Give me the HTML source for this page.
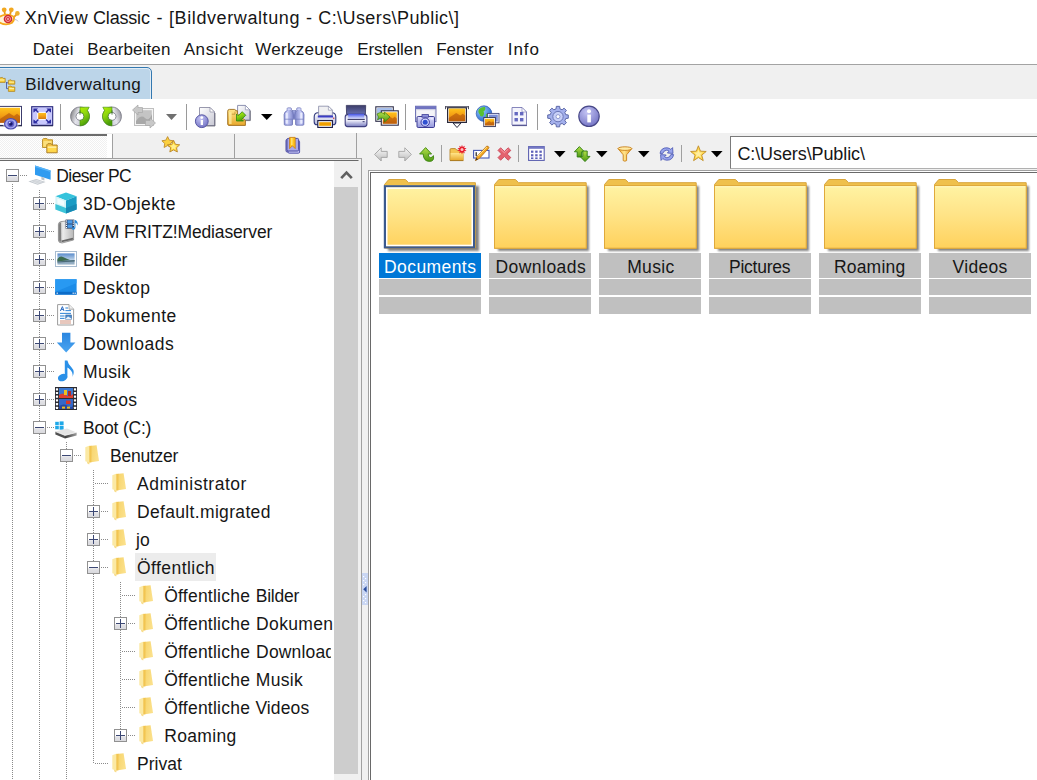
<!DOCTYPE html>
<html lang="de">
<head>
<meta charset="utf-8">
<title>XnView Classic - [Bildverwaltung - C:\Users\Public\]</title>
<style>
html,body{margin:0;padding:0;}
body{width:1037px;height:780px;overflow:hidden;position:relative;background:#fff;font-family:"Liberation Sans",sans-serif;}
.a{position:absolute;}
.t{position:absolute;white-space:pre;line-height:24px;font-family:"Liberation Sans",sans-serif;}
.clip{position:absolute;left:0;top:0;height:780px;overflow:hidden;}
svg{position:absolute;overflow:visible;}
.vsep{position:absolute;width:1px;background:#a0a0a0;}
.dotv{position:absolute;width:1px;background-image:linear-gradient(#8a8a8a 50%,transparent 50%);background-size:1px 2px;}
.doth{position:absolute;height:1px;background-image:linear-gradient(90deg,#8a8a8a 50%,transparent 50%);background-size:2px 1px;}
.box{position:absolute;width:11px;height:11px;border:1px solid #919191;background:linear-gradient(#fff 0,#fff 50%,#e2e2e6 62%,#dadade 100%);}
.box i{position:absolute;left:1px;top:5px;width:9px;height:1px;background:#3c4874;}
.box b{position:absolute;left:5px;top:1px;width:1px;height:9px;background:#3c4874;}
.lb{position:absolute;width:102px;background:#c0c0c0;}
</style>
</head>
<body>
<svg width="0" height="0" style="position:absolute"><defs>
<linearGradient id="ffront" x1="0" y1="0" x2="0" y2="1"><stop offset="0" stop-color="#fff3a3"/><stop offset="0.45" stop-color="#ffe488"/><stop offset="1" stop-color="#ffd15c"/></linearGradient>
<filter id="fsh" x="-10%" y="-10%" width="130%" height="130%"><feGaussianBlur stdDeviation="1.3"/></filter>

<linearGradient id="gor" x1="0" y1="0" x2="0" y2="1"><stop offset="0" stop-color="#ffc41c"/><stop offset="0.5" stop-color="#f4a014"/><stop offset="1" stop-color="#d07410"/></linearGradient>
<linearGradient id="gbl" x1="0" y1="0" x2="0" y2="1"><stop offset="0" stop-color="#b8c0f0"/><stop offset="1" stop-color="#6d74c4"/></linearGradient>
<linearGradient id="ggr" x1="0" y1="0" x2="0" y2="1"><stop offset="0" stop-color="#b4e04a"/><stop offset="1" stop-color="#4e9a12"/></linearGradient>
<linearGradient id="ggy" x1="0" y1="0" x2="1" y2="1"><stop offset="0" stop-color="#f2f2f2"/><stop offset="1" stop-color="#9a9a9a"/></linearGradient>
<linearGradient id="gpg" x1="0" y1="0" x2="1" y2="1"><stop offset="0" stop-color="#ffffff"/><stop offset="1" stop-color="#c8c8d4"/></linearGradient>
<linearGradient id="gfo" x1="0" y1="0" x2="0" y2="1"><stop offset="0" stop-color="#ffe58a"/><stop offset="1" stop-color="#e8a82c"/></linearGradient>
<linearGradient id="gcam" x1="0" y1="0" x2="0" y2="1"><stop offset="0" stop-color="#e0e0fc"/><stop offset="1" stop-color="#9498dc"/></linearGradient>
<radialGradient id="ginfo" cx="0.4" cy="0.3" r="0.8"><stop offset="0" stop-color="#c4c4f4"/><stop offset="1" stop-color="#6c6cc0"/></radialGradient>
<radialGradient id="gglobe" cx="0.35" cy="0.3" r="0.8"><stop offset="0" stop-color="#9ad0ff"/><stop offset="1" stop-color="#1c5cc8"/></radialGradient>
<g id="bigfolder">
 <rect x="4" y="8" width="91" height="65" fill="#505050" opacity="0.7" filter="url(#fsh)"/>
 <path d="M0.5 6.5 L4.8 1.5 L21.4 1.5 L24.6 4.7 L92.2 4.7 L92.2 70.2 L0.5 70.2 Z" fill="#efc04c" stroke="#d7a43a" stroke-width="1"/>
 <rect x="0.5" y="7.5" width="91.7" height="62.7" fill="url(#ffront)" stroke="#dfa93c" stroke-width="1"/>
 <rect x="1.5" y="8.4" width="89.7" height="1" fill="#fff8c8" opacity="0.8"/>
</g>
<g id="bigfoldersel">
 <rect x="4" y="8" width="91" height="65" fill="#505050" opacity="0.7" filter="url(#fsh)"/>
 <path d="M0.5 6.5 L4.8 1.5 L21.4 1.5 L24.6 4.7 L91.4 4.7 L91.4 70 L0.5 70 Z" fill="#efc04c" stroke="#d7a43a" stroke-width="1"/>
 <rect x="0.5" y="7.5" width="90.6" height="62.5" fill="url(#ffront)"/>
 <rect x="0.9" y="8.3" width="89.2" height="61" fill="none" stroke="#3c5a8e" stroke-width="2.2"/>
 <rect x="2.75" y="10.15" width="85.5" height="57.3" fill="none" stroke="#fff" stroke-width="1.5"/>
</g>
</defs></svg>
<!-- title bar -->
<div class="a" id="titlebar" style="left:0;top:0;width:1037px;height:34px;background:#fff"></div>
<svg style="left:-3px;top:6px" width="24" height="22" viewBox="0 0 24 22">
<g stroke="#e8981c" stroke-width="1.8" fill="none"><path d="M8 8.5 L7.3 4.6"/><path d="M13 8.8 L14.2 4.6"/><path d="M16.5 11.6 L19.6 8.4"/></g>
<circle cx="7.2" cy="3.8" r="2.4" fill="#f2a820"/><circle cx="14.3" cy="3.8" r="2.4" fill="#f2a820"/><circle cx="20.4" cy="7.4" r="2.3" fill="#eeb02c"/>
<path d="M-1 12.4 Q8 4.6 17.6 10.2 Q19 14 15.6 17.6 Q8 21.6 1 16.4 Q-1 14.8 -1 12.4Z" fill="#f6a81c"/>
<path d="M1 13 Q8 7.4 15.8 11 Q16.4 14 14 16.2 Q8 19 2.6 15.4 Q1 14.4 1 13Z" fill="#fff4d8"/>
<circle cx="11" cy="13" r="4.3" fill="#d02c34"/><circle cx="11" cy="13" r="2.5" fill="none" stroke="#f8a8a8" stroke-width="0.9"/><circle cx="11" cy="13" r="0.9" fill="#f8c0c0"/>
<path d="M17.6 13.4 Q20 13.4 21 15.4" stroke="#b8b8c8" stroke-width="0.9" fill="none"/>
</svg>
<span class="t" style="left:24.7px;top:5.6px;font-size:18px;letter-spacing:0.456px;color:#161616;">XnView</span><span class="t" style="left:93.0px;top:5.6px;font-size:18px;letter-spacing:-0.178px;color:#161616;">Classic</span><span class="t" style="left:156.6px;top:5.6px;font-size:18px;letter-spacing:0.000px;color:#161616;">-</span><span class="t" style="left:169.0px;top:5.6px;font-size:18px;letter-spacing:0.596px;color:#161616;">[Bildverwaltung</span><span class="t" style="left:305.9px;top:5.6px;font-size:18px;letter-spacing:0.000px;color:#161616;">-</span><span class="t" style="left:318.3px;top:5.6px;font-size:18px;letter-spacing:0.410px;color:#161616;">C:\Users\Public\]</span>
<!-- menu -->
<span class="t" style="left:32.8px;top:37.6px;font-size:17px;letter-spacing:0.253px;color:#161616;">Datei</span><span class="t" style="left:87.2px;top:37.6px;font-size:17px;letter-spacing:0.107px;color:#161616;">Bearbeiten</span><span class="t" style="left:183.7px;top:37.6px;font-size:17px;letter-spacing:0.592px;color:#161616;">Ansicht</span><span class="t" style="left:255.2px;top:37.6px;font-size:17px;letter-spacing:0.302px;color:#161616;">Werkzeuge</span><span class="t" style="left:357.2px;top:37.6px;font-size:17px;letter-spacing:-0.093px;color:#161616;">Erstellen</span><span class="t" style="left:436.2px;top:37.6px;font-size:17px;letter-spacing:-0.040px;color:#161616;">Fenster</span><span class="t" style="left:507.7px;top:37.6px;font-size:17px;letter-spacing:0.980px;color:#161616;">Info</span>
<div class="a" style="left:0;top:64px;width:1037px;height:1px;background:#a3a3a3"></div>
<!-- mdi tab strip -->
<div class="a" style="left:0;top:65px;width:1037px;height:34px;background:#f0f0f0"></div>
<div class="a" style="left:-6px;top:67px;width:158px;height:40px;background:#bcd5e9;border:1px solid #3378b0;border-radius:5px 5px 0 0;box-sizing:border-box;box-shadow:inset 0 0 0 1px rgba(255,255,255,.55)"></div>
<svg style="left:0px;top:76px" width="16" height="17" viewBox="0 0 16 17">
<path d="M6.5 6 L6.5 12.6 L8.4 12.6 M6.5 6.8 L8.4 6.8" stroke="#4858a8" stroke-width="0.9" fill="none"/>
<g stroke="#a87c1c" stroke-width="0.7"><path d="M-1 2 L2.4 1.4 L3.2 2.4 L5.2 2.4 L5.2 6.4 L-1 6.4Z" fill="#f8cc38"/><path d="M8.4 4.4 L11 3.8 L11.8 4.8 L14.8 4.8 L14.8 8.2 L8.4 8.2Z" fill="#f8cc38"/><path d="M8.4 10.6 L11 10 L11.8 11 L14.8 11 L14.8 15.4 L8.4 15.4Z" fill="#f8cc38"/></g>
<g fill="#fff0a0"><rect x="0" y="3.4" width="4.4" height="1.2"/><rect x="9.2" y="5.6" width="4.8" height="1.1"/><rect x="9.2" y="12" width="4.8" height="1.2"/></g>
</svg>
<span class="t" style="left:25.2px;top:72.8px;font-size:17px;letter-spacing:0.380px;color:#161616;">Bildverwaltung</span>
<!-- main toolbar -->
<div class="a" style="left:0;top:99px;width:1037px;height:34px;background:#fff"></div>
<svg style="left:-2px;top:104px" width="24" height="24" viewBox="0 0 24 24"><rect x="0.5" y="2.4" width="23" height="19" fill="#fff" stroke="#3c3c6c" stroke-width="1"/><rect x="2" y="3.8" width="20" height="15" fill="url(#gor)"/><path d="M2 15.05 L11.0 9.05 L16.0 12.05 L19.0 9.8 L22 12.05 L22 18.8 L2 18.8 Z" fill="#b0520a" opacity="0.6"/><path d="M0.2 21.8 L24 21.8" stroke="#202040" stroke-width="1"/><path d="M5 21.4 Q12.6 8 20.6 21.4 Z" fill="#fff"/><ellipse cx="12.8" cy="19.8" rx="6.2" ry="5.2" fill="#a8a8ec" stroke="#4c4cb0" stroke-width="1.2"/><circle cx="12.8" cy="19.8" r="3.4" fill="#6060c8"/><circle cx="12.8" cy="19.8" r="1.9" fill="#18186c"/><circle cx="11.8" cy="18.6" r="0.8" fill="#e8e8ff"/></svg>
<svg style="left:30px;top:104px" width="24" height="24" viewBox="0 0 24 24"><rect x="1.7" y="2.7" width="21" height="18.6" fill="#c8c8fc" stroke="#28287c" stroke-width="1.1"/><path d="M1.4 21.8 L23 21.8" stroke="#181848" stroke-width="0.9"/><rect x="7.7" y="8.4" width="9" height="7.2" fill="url(#gor)" stroke="#fff" stroke-width="1"/><g fill="#2c2ca0"><path d="M3.4 4.4 L8 4.4 L6.7 5.7 L8.9 7.9 L7.9 8.9 L5.7 6.7 L4.4 8 L3.4 8.6Z"/><path d="M21 4.4 L16.4 4.4 L17.7 5.7 L15.5 7.9 L16.5 8.9 L18.7 6.7 L20 8 L21 8.6Z"/><path d="M3.4 19.6 L8 19.6 L6.7 18.3 L8.9 16.1 L7.9 15.1 L5.7 17.3 L4.4 16 L3.4 15.4Z"/><path d="M21 19.6 L16.4 19.6 L17.7 18.3 L15.5 16.1 L16.5 15.1 L18.7 17.3 L20 16 L21 15.4Z"/></g></svg>
<svg style="left:68.3px;top:104px" width="24" height="24" viewBox="0 0 24 24"><defs><linearGradient id="gdisc" x1="0" y1="0" x2="1" y2="0.3"><stop offset="0" stop-color="#6c6c6c"/><stop offset="0.45" stop-color="#e4e4ec"/><stop offset="1" stop-color="#b8b8c4"/></linearGradient><linearGradient id="ggr2" x1="0" y1="0" x2="0.4" y2="1"><stop offset="0" stop-color="#b4f000"/><stop offset="0.5" stop-color="#8cd410"/><stop offset="1" stop-color="#489c08"/></linearGradient></defs><path d="M12 3 A9.4 9.4 0 1 1 11.99 3 Z M12 8.4 A4 4 0 1 0 12.01 8.4 Z" fill-rule="evenodd" fill="url(#gdisc)" stroke="#70707c" stroke-width="0.8"/><path d="M12 3.2 L21.2 3.2 L19.4 6.6 A9.4 9.4 0 0 1 12 21.8 L12 16.4 A4 4 0 0 0 12 8.4 Z" fill="url(#ggr2)" stroke="#3c8c0c" stroke-width="0.6"/><path d="M12 6.4 L12 10.6" stroke="#3c6c2c" stroke-width="0.9"/></svg>
<svg style="left:100.4px;top:104px" width="24" height="24" viewBox="0 0 24 24"><defs><linearGradient id="gdisc2" x1="1" y1="0" x2="0" y2="0.3"><stop offset="0" stop-color="#84848c"/><stop offset="0.45" stop-color="#e4e4ec"/><stop offset="1" stop-color="#b8b8c4"/></linearGradient></defs><path d="M12 3 A9.4 9.4 0 1 1 11.99 3 Z M12 8.4 A4 4 0 1 0 12.01 8.4 Z" fill-rule="evenodd" fill="url(#gdisc2)" stroke="#70707c" stroke-width="0.8"/><path d="M12 3.2 L2.8 3.2 L4.6 6.6 A9.4 9.4 0 0 0 12 21.8 L12 16.4 A4 4 0 0 1 12 8.4 Z" fill="url(#ggr2)" stroke="#3c8c0c" stroke-width="0.6"/><path d="M12 6.4 L12 10.6" stroke="#3c6c2c" stroke-width="0.9"/></svg>
<svg style="left:132px;top:104px" width="24" height="24" viewBox="0 0 24 24"><rect x="3.5" y="5.5" width="17" height="15" fill="#c4c4c4" stroke="#f4f4f4" stroke-width="1.4"/><rect x="2.5" y="4.5" width="19" height="17" fill="none" stroke="#b0b0b0" stroke-width="0.8"/><path d="M4 17 Q9 10 13 14 T20 10 L20 20 L4 20Z" fill="#a8a8a8"/><path d="M0.5 6 L6 1 L6 3.5 L10.5 3.5 L10.5 8.5 L6 8.5 L6 11 Z" fill="#c8c8c8" stroke="#a8a8a8" stroke-width="0.7"/><path d="M23.5 19 L18 24 L18 21.5 L13.5 21.5 L13.5 16.5 L18 16.5 L18 14 Z" fill="#c8c8c8" stroke="#a8a8a8" stroke-width="0.7"/></svg>
<svg style="left:166px;top:114px" width="11" height="6" viewBox="0 0 11 6"><path d="M0 0 L11 0 L5.5 6 Z" fill="#707070"/></svg>
<svg style="left:193px;top:104px" width="24" height="24" viewBox="0 0 24 24"><path d="M6.5 3.5 L17 3.5 L21.5 8 L21.5 21.5 L6.5 21.5 Z" fill="url(#gpg)" stroke="#8c8ca4" stroke-width="0.9"/><path d="M17 3.5 L17 8 L21.5 8 Z" fill="#fff" stroke="#8c8ca4" stroke-width="0.7"/><path d="M7 22 L22 22 L22 9" fill="none" stroke="#404050" stroke-width="0.9" opacity="0.7"/><circle cx="8.8" cy="17.2" r="6.4" fill="url(#ginfo)" stroke="#5858a4" stroke-width="1"/><rect x="7.7" y="16" width="2.3" height="5" fill="#fff"/><circle cx="8.8" cy="13.6" r="1.4" fill="#fff"/></svg>
<svg style="left:227px;top:104px" width="24" height="24" viewBox="0 0 24 24"><path d="M10.6 1.4 L18.4 1.4 L22.8 5.8 L22.8 16 L10.6 16 Z" fill="url(#gpg)" stroke="#8084a8" stroke-width="0.9"/><path d="M18.4 1.4 L18.4 5.8 L22.8 5.8Z" fill="#fff" stroke="#8084a8" stroke-width="0.6"/><path d="M11 16.6 L23.4 16.6 L23.4 6.6" fill="none" stroke="#303040" stroke-width="0.9" opacity="0.6"/><path d="M0.7 7.2 Q0.7 5.4 2.4 5.4 L7.4 5.4 Q8.6 5.4 8.8 6.8 L10.4 6.8 L10.4 10 L18.4 16.5 L18.4 21.4 L2 21.4 Q0.7 21.4 0.7 20 Z" fill="url(#gfo)" stroke="#9c6c1c" stroke-width="0.9" stroke-linejoin="round"/><path d="M2 8.2 L4.6 8.2 L4.6 20 L2 20Z" fill="#fff0a8" opacity="0.7"/><path d="M4.8 10.2 L8 10.2 L8 7.6" stroke="#b8862a" stroke-width="0.7" fill="none"/><path d="M9.5 10 L9.5 17 L16.5 17 L14.8 15.3 L18.8 11.3 L15.2 7.7 L11.2 11.7 Z" fill="url(#ggr2)" stroke="#2c8410" stroke-width="0.8" stroke-linejoin="round"/></svg>
<svg style="left:261px;top:114px" width="11.5" height="6" viewBox="0 0 11.5 6"><path d="M0 0 L11.5 0 L5.75 6 Z" fill="#000"/></svg>
<svg style="left:282px;top:104px" width="24" height="24" viewBox="0 0 24 24"><defs><linearGradient id="gbino" x1="0" y1="0" x2="1" y2="0"><stop offset="0" stop-color="#8c94d8"/><stop offset="0.35" stop-color="#c8ccf8"/><stop offset="1" stop-color="#7c84c8"/></linearGradient></defs><rect x="10.4" y="6.6" width="3.4" height="8.6" fill="#98a0dc" stroke="#6870b4" stroke-width="0.6"/><g><path d="M5.2 4.6 Q5.2 3.9 6 3.9 L8.6 3.9 Q9.3 3.9 9.3 4.6 L9.3 6.6 Q11.4 8 11.4 11 L11.4 14.4 L10.5 15.4 L10.5 20.4 Q10.5 21.2 9.6 21.2 L3.2 21.2 Q2.3 21.2 2.3 20.4 L2.1 10.6 Q2.3 7.6 5.2 6.6Z" fill="url(#gbino)" stroke="#6870b4" stroke-width="0.8" stroke-linejoin="round"/><rect x="3.6" y="8.4" width="2.2" height="11.4" rx="1" fill="#f0f2ff" opacity="0.85"/><rect x="5.6" y="4.4" width="3.2" height="1.6" fill="#d0d4f8"/><path d="M2.4 15.2 L10.4 15.2" stroke="#7078bc" stroke-width="0.7"/></g><g transform="translate(24.1 0) scale(-1 1)"><path d="M5.2 4.6 Q5.2 3.9 6 3.9 L8.6 3.9 Q9.3 3.9 9.3 4.6 L9.3 6.6 Q11.4 8 11.4 11 L11.4 14.4 L10.5 15.4 L10.5 20.4 Q10.5 21.2 9.6 21.2 L3.2 21.2 Q2.3 21.2 2.3 20.4 L2.1 10.6 Q2.3 7.6 5.2 6.6Z" fill="url(#gbino)" stroke="#6870b4" stroke-width="0.8" stroke-linejoin="round"/><rect x="3.6" y="8.4" width="2.2" height="11.4" rx="1" fill="#f0f2ff" opacity="0.85"/><rect x="5.6" y="4.4" width="3.2" height="1.6" fill="#d0d4f8"/><path d="M2.4 15.2 L10.4 15.2" stroke="#7078bc" stroke-width="0.7"/></g></svg>
<svg style="left:313px;top:104px" width="24" height="24" viewBox="0 0 24 24"><defs><linearGradient id="gprn" x1="0" y1="0" x2="0" y2="1"><stop offset="0" stop-color="#ffffff"/><stop offset="1" stop-color="#b4b8dc"/></linearGradient></defs><path d="M1.2 13 Q1.2 8.8 5 8.8 L19 8.8 Q22.8 8.8 22.8 13 L22.8 18 Q22.8 20.8 20 20.8 L4 20.8 Q1.2 20.8 1.2 18Z" fill="url(#gprn)" stroke="#30387c" stroke-width="1.1"/><path d="M5.6 2.2 L15.4 2.2 L19.4 6.2 L19.4 11.4 L5.6 11.4Z" fill="#f0f0f2" stroke="#8488a4" stroke-width="0.8"/><path d="M15.4 2.2 L15.4 6.2 L19.4 6.2Z" fill="#fff" stroke="#8488a4" stroke-width="0.6"/><rect x="4.8" y="11.5" width="15.2" height="2" fill="#3c3cc4"/><rect x="4.8" y="16.6" width="14.6" height="6.8" fill="#fff" stroke="#181840" stroke-width="1.1"/><rect x="6.2" y="18.2" width="11.8" height="3.6" fill="#f0a000"/><rect x="20" y="13.6" width="1.4" height="1.2" fill="#c83040"/></svg>
<svg style="left:344px;top:104px" width="24" height="24" viewBox="0 0 24 24"><defs><linearGradient id="gsc" x1="0" y1="0" x2="0" y2="1"><stop offset="0" stop-color="#3c3c68"/><stop offset="1" stop-color="#6870b0"/></linearGradient><linearGradient id="gsc2" x1="0" y1="0" x2="0" y2="1"><stop offset="0" stop-color="#4050e4"/><stop offset="1" stop-color="#e4e8ff"/></linearGradient><linearGradient id="gsc3" x1="0" y1="0" x2="0" y2="1"><stop offset="0" stop-color="#c8cce8"/><stop offset="0.45" stop-color="#f4f4fc"/><stop offset="1" stop-color="#787cc0"/></linearGradient></defs><path d="M1.2 13 Q1.2 10.6 3.4 10.6 L20.6 10.6 Q22.9 10.6 22.9 13 L22.9 20 Q22.9 22.6 20.4 22.6 L3.6 22.6 Q1.2 22.6 1.2 20Z" fill="url(#gsc3)" stroke="#404080" stroke-width="1.1"/><path d="M2.3 1.4 L21.7 1.4 L21.4 10.2 L2.6 10.2 Z" fill="url(#gsc)" stroke="#34345c" stroke-width="0.8"/><rect x="4.2" y="9.8" width="16" height="5.2" fill="url(#gsc2)"/><path d="M3.6 15.4 L20.8 15.4" stroke="#30305c" stroke-width="1"/><rect x="18.6" y="17.2" width="2" height="1" fill="#383870"/></svg>
<svg style="left:375px;top:104px" width="24" height="24" viewBox="0 0 24 24"><rect x="0.8" y="2.8" width="17.5" height="14.5" fill="#fff" stroke="#30304c" stroke-width="1.1"/><rect x="2.3" y="4.3" width="14.5" height="11.5" fill="#7c9cdc"/><path d="M2.3 4.3 L16.8 4.3 L16.8 8 L2.3 10Z" fill="#a8c0ec"/><rect x="6.3" y="6.8" width="17" height="14.4" fill="#fff" stroke="#30304c" stroke-width="1.1"/><rect x="7.8" y="8.3" width="14" height="11.4" fill="url(#gor)"/><path d="M7.8 16.85 L14.1 12.290000000000001 L17.599999999999998 14.57 L19.7 12.860000000000001 L21.8 14.57 L21.8 19.700000000000003 L7.8 19.700000000000003 Z" fill="#b0520a" opacity="0.6"/><path d="M2 10 Q7 7 9.5 10.5 L9.5 8 L15 13 L9.5 18 L9.5 15.2 Q6 12.5 2.5 16 Q4.5 13 2 10Z" fill="url(#ggr)" stroke="#3c7c10" stroke-width="0.7"/></svg>
<svg style="left:414px;top:104px" width="24" height="24" viewBox="0 0 24 24"><rect x="1.5" y="2.2" width="20.5" height="15.5" fill="#e4e4ec" stroke="#6468b0" stroke-width="0.9"/><rect x="1.5" y="2.2" width="20.5" height="3" fill="#7074c0"/><rect x="3" y="6.4" width="17.5" height="10" fill="#f4f4f8"/><rect x="3" y="12.5" width="17.5" height="11" rx="1.2" fill="url(#gcam)" stroke="#3c3c94" stroke-width="1"/><rect x="8" y="10.6" width="6.5" height="2.6" fill="#8c90dc" stroke="#3c3c94" stroke-width="0.8"/><circle cx="11.2" cy="18.2" r="4.2" fill="#d4d8ff" stroke="#3838a0" stroke-width="1"/><circle cx="11.2" cy="18.2" r="2.5" fill="#3050d0"/><rect x="16.5" y="14" width="2.6" height="1.6" fill="#e8e8ff"/></svg>
<svg style="left:445px;top:104px" width="24" height="24" viewBox="0 0 24 24"><rect x="0" y="2.2" width="24" height="1.2" fill="#505060"/><rect x="0" y="2.2" width="1" height="3" fill="#505060"/><rect x="23" y="2.2" width="1" height="3" fill="#505060"/><rect x="2.6" y="3.8" width="18.8" height="14.6" fill="#fff" stroke="#28283c" stroke-width="1.2"/><rect x="3.8" y="4.6" width="16.4" height="12.6" fill="url(#gor)"/><path d="M3.8 14.049999999999999 L11.18 9.009999999999998 L15.279999999999998 11.530000000000001 L17.74 9.64 L20.2 11.530000000000001 L20.2 17.2 L3.8 17.2 Z" fill="#b0520a" opacity="0.6"/><path d="M8 19 L16 19 L12 23.5 Z" fill="#fff" stroke="#28283c" stroke-width="1"/></svg>
<svg style="left:476px;top:104px" width="24" height="24" viewBox="0 0 24 24"><circle cx="8" cy="9.6" r="7.8" fill="url(#gglobe)" stroke="#2c58b0" stroke-width="0.7"/><path d="M3 5 Q6 2.5 9 3 Q10 6 7.5 7.5 Q9 10 6.5 12.5 Q4 13 3.5 10 Q1.5 8 3 5Z" fill="#58c030"/><path d="M10 10 Q13 9 14.5 11.5 Q13 15 10.5 15.5 Q9.5 13 10 10Z" fill="#58c030"/><rect x="11.6" y="9.4" width="11.4" height="9.4" fill="#fff" stroke="#404880" stroke-width="0.9"/><rect x="12.8" y="10.6" width="9" height="7" fill="#7c90d8"/><rect x="7.8" y="13.6" width="11.6" height="9" fill="#fff" stroke="#303050" stroke-width="0.9"/><rect x="9" y="14.8" width="9.2" height="6.6" fill="url(#gor)"/><path d="M9 19.75 L13.14 17.11 L15.44 18.43 L16.82 17.44 L18.2 18.43 L18.2 21.4 L9 21.4 Z" fill="#b0520a" opacity="0.6"/></svg>
<svg style="left:507px;top:104px" width="24" height="24" viewBox="0 0 24 24"><path d="M5 3.5 L15 3.5 L19.5 8 L19.5 21 L5 21 Z" fill="#f4f4fc" stroke="#7878b4" stroke-width="0.9"/><path d="M15 3.5 L15 8 L19.5 8Z" fill="#fff" stroke="#7878b4" stroke-width="0.6"/><path d="M5.2 21.6 L20 21.6" stroke="#404080" stroke-width="0.9"/><g fill="#6468c0"><rect x="7.5" y="8" width="3.4" height="3.4"/><rect x="13" y="8" width="3.4" height="3.4"/><rect x="7.5" y="14" width="3.4" height="3.4"/><rect x="13" y="14" width="3.4" height="3.4"/></g></svg>
<svg style="left:545.5px;top:104px" width="24" height="24" viewBox="0 0 24 24"><path d="M10.34 2.33 L13.66 2.33 L13.90 4.83 L16.15 5.76 L18.09 4.17 L20.43 6.51 L18.84 8.45 L19.77 10.70 L22.27 10.94 L22.27 14.26 L19.77 14.50 L18.84 16.75 L20.43 18.69 L18.09 21.03 L16.15 19.44 L13.90 20.37 L13.66 22.87 L10.34 22.87 L10.10 20.37 L7.85 19.44 L5.91 21.03 L3.57 18.69 L5.16 16.75 L4.23 14.50 L1.73 14.26 L1.73 10.94 L4.23 10.70 L5.16 8.45 L3.57 6.51 L5.91 4.17 L7.85 5.76 L10.10 4.83Z" fill="#a4b0ec" stroke="#5c68a8" stroke-width="1" stroke-linejoin="round"/><circle cx="12" cy="12.6" r="5.2" fill="#c8d0f8" stroke="#6c78b8" stroke-width="1"/><circle cx="12" cy="12.6" r="2" fill="#fff" stroke="#7c88c4" stroke-width="0.8"/></svg>
<svg style="left:576.6px;top:104px" width="24" height="24" viewBox="0 0 24 24"><circle cx="12" cy="12.3" r="10.2" fill="url(#ginfo)" stroke="#484888" stroke-width="1.2"/><rect x="10.3" y="10.6" width="3.6" height="7.8" fill="#fff"/><circle cx="12" cy="7.2" r="2" fill="#fff"/></svg>
<div class="vsep" style="left:60px;top:104px;height:26px;background:#9a9a9a"></div>
<div class="vsep" style="left:186px;top:104px;height:26px;background:#9a9a9a"></div>
<div class="vsep" style="left:405px;top:104px;height:26px;background:#9a9a9a"></div>
<div class="vsep" style="left:537px;top:104px;height:26px;background:#9a9a9a"></div>
<!-- lower area bg -->
<div class="a" style="left:0;top:133px;width:1037px;height:647px;background:#f0f0f0"></div>
<!-- left tab control -->
<div class="a" id="lefttabs" style="left:0;top:133px;width:357px;height:26px;">
  <div class="a" style="left:0;top:1px;width:107px;height:24px;background:repeating-conic-gradient(#fff 0 25%,#f0f0f0 0 50%) 0 0/2px 2px;border-top:2px solid #6c6c6c;box-sizing:border-box"></div>
  <div class="a" style="left:107px;top:1px;width:5px;height:24px;background:#fff"></div>
  <div class="vsep" style="left:112px;top:1px;height:24px"></div>
  <div class="vsep" style="left:234px;top:1px;height:24px"></div>
  <div class="vsep" style="left:356px;top:0px;height:26px"></div>
</div>
<svg style="left:42px;top:138px" width="16" height="16" viewBox="0 0 16 16"><path d="M0.5 1.6 L1.6 0.5 L5 0.5 L6 1.8 L10.5 1.8 L10.5 9.5 L0.5 9.5Z" fill="#f4c84c" stroke="#b88c28" stroke-width="0.9"/><rect x="1.4" y="3" width="8.2" height="5.6" fill="#fbe07c"/><path d="M4.8 6.8 L5.9 5.7 L9.2 5.7 L10.2 7 L15.2 7 L15.2 14.8 L4.8 14.8Z" fill="#f4c040" stroke="#a87c20" stroke-width="0.9"/><rect x="5.7" y="8.4" width="8.6" height="5.5" fill="#ffd84c"/><rect x="5.7" y="8.4" width="8.6" height="1.6" fill="#ffec9c"/></svg>
<svg style="left:160px;top:135px" width="22" height="20" viewBox="0 0 22 20"><path d="M7.60 1.60 L9.36 5.17 L13.31 5.75 L10.45 8.53 L11.13 12.45 L7.60 10.60 L4.07 12.45 L4.75 8.53 L1.89 5.75 L5.84 5.17Z" fill="#fbd040" stroke="#c08c2c" stroke-width="0.9" stroke-linejoin="round"/><path d="M13.60 5.40 L15.42 9.29 L19.69 9.82 L16.55 12.76 L17.36 16.98 L13.60 14.90 L9.84 16.98 L10.65 12.76 L7.51 9.82 L11.78 9.29Z" fill="#ffd83c" stroke="#b8842c" stroke-width="0.9" stroke-linejoin="round"/><path d="M13.60 8.40 L14.66 10.34 L16.83 10.75 L15.31 12.36 L15.60 14.55 L13.60 13.60 L11.60 14.55 L11.89 12.36 L10.37 10.75 L12.54 10.34Z" fill="#ffee90"/></svg>
<svg style="left:285px;top:137px" width="16" height="17" viewBox="0 0 16 17"><rect x="1" y="2.4" width="11.6" height="12.6" rx="1.2" fill="#9c9ce0" stroke="#4c4ca0" stroke-width="1"/><rect x="3" y="3.6" width="11.6" height="12.6" rx="1.2" fill="#c4c4f4" stroke="#5858b0" stroke-width="1"/><rect x="2" y="1.4" width="11.6" height="12.6" rx="1.2" fill="#a8a8e8" stroke="#4c4ca0" stroke-width="1"/><path d="M4.6 0.4 L10.2 0.4 L10.2 11.6 L7.4 8.8 L4.6 11.6Z" fill="#ffc21c" stroke="#c87c10" stroke-width="0.8"/><rect x="6" y="1" width="1.6" height="7" fill="#ffe880" opacity="0.8"/></svg>
<!-- tree panel -->
<div class="a" id="tree" style="left:-2px;top:158px;width:364px;height:640px;box-sizing:border-box;border:1px solid #a0a0a0;background:#f0f0f0">
  <div class="a" style="left:0;top:1px;width:360px;height:640px;box-sizing:border-box;border:1px solid #696969;border-right-color:#f0f0f0;background:#fff"></div>
</div>
<div class="a" style="left:134.9px;top:553px;width:81px;height:28px;background:#ececec"></div>
<div class="dotv" style="left:12px;top:184px;height:596px"></div>
<div class="dotv" style="left:39px;top:190px;height:590px"></div>
<div class="dotv" style="left:66px;top:442px;height:338px"></div>
<div class="dotv" style="left:93px;top:470px;height:294px"></div>
<div class="dotv" style="left:120px;top:582px;height:154px"></div>
<div class="doth" style="left:20px;top:175px;width:7px"></div>
<div class="doth" style="left:47px;top:203px;width:7px"></div>
<div class="doth" style="left:47px;top:231px;width:7px"></div>
<div class="doth" style="left:47px;top:259px;width:7px"></div>
<div class="doth" style="left:47px;top:287px;width:7px"></div>
<div class="doth" style="left:47px;top:315px;width:7px"></div>
<div class="doth" style="left:47px;top:343px;width:7px"></div>
<div class="doth" style="left:47px;top:371px;width:7px"></div>
<div class="doth" style="left:47px;top:399px;width:7px"></div>
<div class="doth" style="left:47px;top:427px;width:7px"></div>
<div class="doth" style="left:74px;top:455px;width:7px"></div>
<div class="doth" style="left:95px;top:483px;width:13px"></div>
<div class="doth" style="left:101px;top:511px;width:7px"></div>
<div class="doth" style="left:101px;top:539px;width:7px"></div>
<div class="doth" style="left:101px;top:567px;width:7px"></div>
<div class="doth" style="left:122px;top:595px;width:13px"></div>
<div class="doth" style="left:128px;top:623px;width:7px"></div>
<div class="doth" style="left:122px;top:651px;width:13px"></div>
<div class="doth" style="left:122px;top:679px;width:13px"></div>
<div class="doth" style="left:122px;top:707px;width:13px"></div>
<div class="doth" style="left:128px;top:735px;width:7px"></div>
<div class="doth" style="left:95px;top:763px;width:13px"></div>
<div class="box" style="left:6px;top:169px"><i></i></div>
<div class="box" style="left:33px;top:197px"><i></i><b></b></div>
<div class="box" style="left:33px;top:225px"><i></i><b></b></div>
<div class="box" style="left:33px;top:253px"><i></i><b></b></div>
<div class="box" style="left:33px;top:281px"><i></i><b></b></div>
<div class="box" style="left:33px;top:309px"><i></i><b></b></div>
<div class="box" style="left:33px;top:337px"><i></i><b></b></div>
<div class="box" style="left:33px;top:365px"><i></i><b></b></div>
<div class="box" style="left:33px;top:393px"><i></i><b></b></div>
<div class="box" style="left:33px;top:421px"><i></i></div>
<div class="box" style="left:60px;top:449px"><i></i></div>
<div class="box" style="left:87px;top:505px"><i></i><b></b></div>
<div class="box" style="left:87px;top:533px"><i></i><b></b></div>
<div class="box" style="left:87px;top:561px"><i></i></div>
<div class="box" style="left:114px;top:617px"><i></i><b></b></div>
<div class="box" style="left:114px;top:729px"><i></i><b></b></div>
<svg width="0" height="0" style="position:absolute"><defs><linearGradient id="gsf" x1="0" y1="0" x2="1" y2="0.3"><stop offset="0" stop-color="#f6d267"/><stop offset="1" stop-color="#fbe08a"/></linearGradient><linearGradient id="gdl" x1="0" y1="0" x2="0" y2="1"><stop offset="0" stop-color="#2a86e0"/><stop offset="1" stop-color="#4aa4f0"/></linearGradient><g id="sfold"><path d="M0.3 2.2 L4.6 0.6 L4.6 17.4 L0.3 16.2Z" fill="#fbe9a4"/><path d="M1.8 16.6 L4.6 17.4 L4.2 19.6 L2.4 18.6Z" fill="#f8dc88"/><path d="M4.4 1 L11.6 0.2 L14 16 L4.4 17.6Z" fill="url(#gsf)"/><path d="M4.4 1 L6.6 0.8 L6.4 17.2 L4.4 17.6Z" fill="#f1c24c" opacity="0.85"/></g></defs></svg>
<svg style="left:28px;top:164px" width="24" height="22" viewBox="0 0 24 22"><path d="M7 1.4 L22.6 6.4 L22.6 15.8 L7 10.8Z" fill="#2f9bf0"/><path d="M7 1.4 L22.6 6.4 L22.6 8 L7 3Z" fill="#58b4f8"/><path d="M13.4 12.8 L16.4 13.8 L16.4 16.4 L13.4 15.4Z" fill="#b8c0c8"/><path d="M0.4 17.6 L8.4 15 L17.6 18 L9.6 20.8Z" fill="#c0c6cc"/><path d="M2.6 17.6 L8.4 15.8 L15.4 18 L9.6 19.9Z" fill="#e2e6ea"/><path d="M4.4 17 L11.6 19.3 M6.4 16.4 L13.6 18.7" stroke="#c4c8cc" stroke-width="0.6"/></svg>
<svg style="left:55px;top:192px" width="22" height="22" viewBox="0 0 22 22"><path d="M11 0.4 L21.6 4.2 L11 8.4 L0.4 4.2Z" fill="#35c3dc"/><path d="M0.4 4.2 L11 8.4 L11 21.6 L0.4 17.4Z" fill="#d4f3f7"/><path d="M0.4 12 L11 16 L11 21.6 L0.4 17.4Z" fill="#3cc4d8"/><path d="M11 8.4 L21.6 4.2 L21.6 17.4 L11 21.6Z" fill="#1a9cc4"/><path d="M11 16 L21.6 12 L21.6 17.4 L11 21.6Z" fill="#168ab4"/><path d="M2.4 6.4 L9.2 9 L9.2 14 L2.4 11.6Z" fill="#f2fcfd"/></svg>
<svg style="left:57px;top:219px" width="22" height="25" viewBox="0 0 22 25"><defs><linearGradient id="gms" x1="0" y1="0" x2="1" y2="0"><stop offset="0" stop-color="#9c9c9c"/><stop offset="0.3" stop-color="#ececec"/><stop offset="1" stop-color="#b8b8b8"/></linearGradient></defs><path d="M1.4 5.6 Q1.4 3 4 2.6 L12 1.6 L16.6 4 L16.6 21 L5 24 Q1.4 24 1.4 21Z" fill="url(#gms)" stroke="#7c7c7c" stroke-width="0.7"/><path d="M2 5.6 Q2 3.6 4 3.4 L4.2 23 Q2 22.6 2 21Z" fill="#808080"/><path d="M4.6 22.4 L16 19.6" stroke="#686868" stroke-width="1.6"/><rect x="8.6" y="0.6" width="8.6" height="9" fill="#2c3c5c"/><rect x="10.4" y="1.2" width="5" height="3.4" fill="#4c9ce8"/><rect x="10.4" y="5.4" width="5" height="3.4" fill="#4c9ce8"/><g fill="#fff"><rect x="9" y="1.4" width="1" height="1.2"/><rect x="9" y="3.6" width="1" height="1.2"/><rect x="9" y="5.8" width="1" height="1.2"/><rect x="9" y="8" width="1" height="1.2"/><rect x="15.8" y="1.4" width="1" height="1.2"/><rect x="15.8" y="3.6" width="1" height="1.2"/><rect x="15.8" y="5.8" width="1" height="1.2"/></g><path d="M17.6 0.8 Q21.4 2 20.6 6.4 Q20 4 18.4 3.8 L18.4 9 Q18 11 16 10.8 Q14.4 10.4 15 9 Q16 7.8 17.6 8.4Z" fill="#2a8cdc"/></svg>
<svg style="left:55px;top:251px" width="22" height="16" viewBox="0 0 22 16"><defs><linearGradient id="gsky" x1="0" y1="0" x2="0" y2="1"><stop offset="0" stop-color="#5a8ccc"/><stop offset="0.55" stop-color="#b8d0e8"/><stop offset="0.6" stop-color="#7c9cb4"/><stop offset="1" stop-color="#9cb4c8"/></linearGradient></defs><rect x="0.5" y="0.5" width="21" height="15" fill="#fff" stroke="#a8bcd0" stroke-width="1"/><rect x="2.4" y="2.4" width="17.2" height="11.2" fill="url(#gsky)"/><path d="M2.4 8 Q5 4.4 8 6 Q11 7.4 15 9 L2.4 10.4Z" fill="#3c6c50"/><path d="M2.4 10.4 L19.6 9 L19.6 10.6 L2.4 11.4Z" fill="#4c6c78"/></svg>
<svg style="left:55px;top:279px" width="22" height="16" viewBox="0 0 22 16"><rect x="0.2" y="0.2" width="21.4" height="15.4" fill="#1c8ce8"/><path d="M0.2 0.2 L21.6 0.2 L21.6 4 L0.2 13Z" fill="#2c9cf4" opacity="0.8"/><rect x="0.2" y="12.8" width="21.4" height="2.8" fill="#0c6cc8"/><g fill="#fff"><rect x="1.6" y="13.6" width="1.2" height="1.2"/><rect x="17.6" y="13.6" width="1.2" height="1.2"/><rect x="19.6" y="13.6" width="1.2" height="1.2"/></g></svg>
<svg style="left:57px;top:304px" width="18" height="22" viewBox="0 0 18 22"><path d="M0.6 0.6 L12 0.6 L16.6 5.2 L16.6 21 L0.6 21Z" fill="#fff" stroke="#9c9c9c" stroke-width="1"/><path d="M12 0.6 L12 5.2 L16.6 5.2" fill="#eee" stroke="#9c9c9c" stroke-width="0.8"/><path d="M3.4 7 L5.4 2.6 L7 7 M4.2 5.4 L6.4 5.4" stroke="#2c6cc4" stroke-width="1" fill="none"/><g stroke="#3c8cd8" stroke-width="1.1"><path d="M8.4 4 L11 4"/><path d="M8.4 6.6 L14 6.6"/><path d="M3 9.4 L14 9.4"/><path d="M3 12 L7.6 12"/><path d="M3 14.4 L7.6 14.4"/></g><g stroke="#d0907c" stroke-width="1"><path d="M3 17 L14 17"/><path d="M3 19 L14 19"/></g><rect x="8.8" y="11" width="5.6" height="4.6" fill="#4c8cd0" stroke="#2c5c94" stroke-width="0.6"/><path d="M8.8 14.4 L11 12.4 L14.4 14.6 L14.4 15.6 L8.8 15.6Z" fill="#e8f0f8"/></svg>
<svg style="left:56px;top:332px" width="20" height="21" viewBox="0 0 20 21"><path d="M6 0.7 L14.4 0.7 L14.4 10.6 L19.4 10.6 L10.2 20.4 L0.8 10.6 L6 10.6Z" fill="url(#gdl)"/></svg>
<svg style="left:57px;top:360px" width="18" height="22" viewBox="0 0 18 22"><ellipse cx="5.6" cy="17.6" rx="4.8" ry="3.6" transform="rotate(-20 5.6 17.6)" fill="#2a90e8"/><path d="M7.8 0.4 L10.4 0.4 Q11 4 14.6 7.4 Q18.4 11.4 15.4 17 Q16.4 12 12.4 9 Q11 8 10.4 7.6 L10.4 17.4 L7.8 17.4Z" fill="#2a90e8"/></svg>
<svg style="left:55px;top:386.5px" width="22" height="23" viewBox="0 0 22 23"><rect x="0" y="0" width="22" height="23" fill="#2c2c34"/><rect x="4" y="1" width="14" height="10" fill="#3c78d0"/><rect x="4" y="12" width="14" height="10" fill="#3468c8"/><path d="M4 8 Q8 5 11 8 T18 7 L18 11 L4 11Z" fill="#e04030"/><path d="M9 3 L12 3 L12 8 L9 8Z" fill="#f0c020"/><path d="M13 4 L16 4 L16 9 L13 9Z" fill="#b02828"/><path d="M4 19 Q9 16 13 19 T18 18 L18 22 L4 22Z" fill="#2848a0"/><path d="M11 13.6 L15.6 13.6 L15.6 17 L11 17Z" fill="#d83828"/><path d="M7 19.6 L10 19.6 L10 21.6 L7 21.6Z" fill="#f0c020"/><path d="M12 19.6 L15 19.6 L15 21.6 L12 21.6Z" fill="#f0c020"/><rect x="0.9" y="1.2" width="2.2" height="2.2" rx="0.5" fill="#fff"/><rect x="18.9" y="1.2" width="2.2" height="2.2" rx="0.5" fill="#fff"/><rect x="0.9" y="4.9" width="2.2" height="2.2" rx="0.5" fill="#fff"/><rect x="18.9" y="4.9" width="2.2" height="2.2" rx="0.5" fill="#fff"/><rect x="0.9" y="8.6" width="2.2" height="2.2" rx="0.5" fill="#fff"/><rect x="18.9" y="8.6" width="2.2" height="2.2" rx="0.5" fill="#fff"/><rect x="0.9" y="12.3" width="2.2" height="2.2" rx="0.5" fill="#fff"/><rect x="18.9" y="12.3" width="2.2" height="2.2" rx="0.5" fill="#fff"/><rect x="0.9" y="16.0" width="2.2" height="2.2" rx="0.5" fill="#fff"/><rect x="18.9" y="16.0" width="2.2" height="2.2" rx="0.5" fill="#fff"/><rect x="0.9" y="19.7" width="2.2" height="2.2" rx="0.5" fill="#fff"/><rect x="18.9" y="19.7" width="2.2" height="2.2" rx="0.5" fill="#fff"/></svg>
<svg style="left:55px;top:421px" width="22" height="18" viewBox="0 0 22 18"><g fill="#1ea8e8"><rect x="0.2" y="0.8" width="3.6" height="3.4"/><rect x="4.6" y="0.4" width="4" height="3.8"/><rect x="0.2" y="4.9" width="3.6" height="3.4"/><rect x="4.6" y="4.9" width="4" height="3.8"/></g><defs><linearGradient id="gdr" x1="0" y1="0" x2="1" y2="0"><stop offset="0" stop-color="#3c3c3c"/><stop offset="1" stop-color="#9c9c9c"/></linearGradient></defs><path d="M0.4 10.6 L12 7.4 L21.6 11.4 L10 14.4Z" fill="#e4e4e4"/><path d="M0.4 10.6 L10 14.4 L10 17.4 L0.4 13.6Z" fill="#505050"/><path d="M10 14.4 L21.6 11.4 L21.6 14.4 L10 17.4Z" fill="url(#gdr)"/><path d="M0.4 10.6 L10 14.4 L21.6 11.4" stroke="#fafafa" stroke-width="0.7" fill="none"/></svg>
<svg style="left:84.8px;top:445.2px" width="15" height="20" viewBox="0 0 15 20"><use href="#sfold"/></svg>
<svg style="left:112.0px;top:473.2px" width="15" height="20" viewBox="0 0 15 20"><use href="#sfold"/></svg>
<svg style="left:112.0px;top:501.2px" width="15" height="20" viewBox="0 0 15 20"><use href="#sfold"/></svg>
<svg style="left:112.0px;top:529.2px" width="15" height="20" viewBox="0 0 15 20"><use href="#sfold"/></svg>
<svg style="left:112.0px;top:557.2px" width="15" height="20" viewBox="0 0 15 20"><use href="#sfold"/></svg>
<svg style="left:139.2px;top:585.2px" width="15" height="20" viewBox="0 0 15 20"><use href="#sfold"/></svg>
<svg style="left:139.2px;top:613.2px" width="15" height="20" viewBox="0 0 15 20"><use href="#sfold"/></svg>
<svg style="left:139.2px;top:641.2px" width="15" height="20" viewBox="0 0 15 20"><use href="#sfold"/></svg>
<svg style="left:139.2px;top:669.2px" width="15" height="20" viewBox="0 0 15 20"><use href="#sfold"/></svg>
<svg style="left:139.2px;top:697.2px" width="15" height="20" viewBox="0 0 15 20"><use href="#sfold"/></svg>
<svg style="left:139.2px;top:725.2px" width="15" height="20" viewBox="0 0 15 20"><use href="#sfold"/></svg>
<svg style="left:112.0px;top:753.2px" width="15" height="20" viewBox="0 0 15 20"><use href="#sfold"/></svg>
<span class="t" style="left:56.2px;top:163.6px;font-size:17.5px;letter-spacing:-0.531px;color:#161616;">Dieser PC</span><span class="t" style="left:83.1px;top:191.6px;font-size:17.5px;letter-spacing:0.420px;color:#161616;">3D-Objekte</span><span class="t" style="left:83.1px;top:219.6px;font-size:17.5px;letter-spacing:-0.150px;color:#161616;">AVM FRITZ!Mediaserver</span><span class="t" style="left:83.1px;top:247.6px;font-size:17.5px;letter-spacing:-0.090px;color:#161616;">Bilder</span><span class="t" style="left:83.1px;top:275.6px;font-size:17.5px;letter-spacing:0.449px;color:#161616;">Desktop</span><span class="t" style="left:83.1px;top:303.6px;font-size:17.5px;letter-spacing:0.463px;color:#161616;">Dokumente</span><span class="t" style="left:83.1px;top:331.6px;font-size:17.5px;letter-spacing:0.503px;color:#161616;">Downloads</span><span class="t" style="left:83.1px;top:359.6px;font-size:17.5px;letter-spacing:0.374px;color:#161616;">Musik</span><span class="t" style="left:82.8px;top:387.6px;font-size:17.5px;letter-spacing:0.199px;color:#161616;">Videos</span><span class="t" style="left:83.1px;top:415.6px;font-size:17.5px;letter-spacing:-0.216px;color:#161616;">Boot (C:)</span><span class="t" style="left:110.1px;top:443.6px;font-size:17.5px;letter-spacing:-0.250px;color:#161616;">Benutzer</span><span class="t" style="left:137.0px;top:471.6px;font-size:17.5px;letter-spacing:0.526px;color:#161616;">Administrator</span><span class="t" style="left:137.0px;top:499.6px;font-size:17.5px;letter-spacing:0.333px;color:#161616;">Default.migrated</span><span class="t" style="left:136.0px;top:527.6px;font-size:17.5px;letter-spacing:0.000px;color:#161616;">jo</span><span class="t" style="left:137.0px;top:555.6px;font-size:17.5px;letter-spacing:0.443px;color:#161616;">Öffentlich</span><span class="t" style="left:164.2px;top:583.6px;font-size:17.5px;letter-spacing:0.236px;color:#161616;">Öffentliche</span><span class="t" style="left:255.8px;top:583.6px;font-size:17.5px;letter-spacing:-0.250px;color:#161616;">Bilder</span><span class="t" style="left:164.2px;top:611.6px;font-size:17.5px;letter-spacing:0.236px;color:#161616;">Öffentliche</span><div class="clip" style="width:332.7px"><span class="t" style="left:256.1px;top:611.6px;font-size:17.5px;letter-spacing:0.349px;color:#161616;">Dokumente</span></div><span class="t" style="left:164.2px;top:639.6px;font-size:17.5px;letter-spacing:0.236px;color:#161616;">Öffentliche</span><div class="clip" style="width:331.4px"><span class="t" style="left:256.1px;top:639.6px;font-size:17.5px;letter-spacing:0.165px;color:#161616;">Downloads</span></div><span class="t" style="left:164.2px;top:667.6px;font-size:17.5px;letter-spacing:0.236px;color:#161616;">Öffentliche</span><span class="t" style="left:255.8px;top:667.6px;font-size:17.5px;letter-spacing:0.324px;color:#161616;">Musik</span><span class="t" style="left:164.2px;top:695.6px;font-size:17.5px;letter-spacing:0.236px;color:#161616;">Öffentliche</span><span class="t" style="left:255.4px;top:695.6px;font-size:17.5px;letter-spacing:0.119px;color:#161616;">Videos</span><span class="t" style="left:164.2px;top:723.6px;font-size:17.5px;letter-spacing:0.342px;color:#161616;">Roaming</span><span class="t" style="left:137.0px;top:751.6px;font-size:17.5px;letter-spacing:0.033px;color:#161616;">Privat</span>
<!-- tree scrollbar -->
<div class="a" style="left:334px;top:161px;width:25px;height:619px;background:#f0f0f0"></div>
<div class="a" style="left:334px;top:187px;width:24px;height:587px;background:#cdcdcd"></div>
<svg style="left:340px;top:170px" width="13" height="10" viewBox="0 0 13 10"><path d="M1.2 8.2 L6.5 2.6 L11.8 8.2" fill="none" stroke="#606060" stroke-width="2.6"/></svg>
<!-- splitter -->
<div class="a" style="left:362px;top:133px;width:6px;height:647px;background:#f0f0f0"></div>
<div class="a" style="left:362px;top:573px;width:6px;height:32px;background:#c9d6f3"></div>
<svg style="left:362px;top:573px" width="6" height="32" viewBox="0 0 6 32"><g fill="#fff"><rect x="1" y="3" width="1.2" height="1.2"/><rect x="3" y="5" width="1.2" height="1.2"/><rect x="1" y="7" width="1.2" height="1.2"/><rect x="3" y="9" width="1.2" height="1.2"/><rect x="1" y="11" width="1.2" height="1.2"/><rect x="3" y="21" width="1.2" height="1.2"/><rect x="1" y="23" width="1.2" height="1.2"/><rect x="3" y="25" width="1.2" height="1.2"/><rect x="1" y="27" width="1.2" height="1.2"/><rect x="3" y="29" width="1.2" height="1.2"/></g><path d="M4.6 13 L4.6 19.4 L1.2 16.2 Z" fill="#2c4f9e"/></svg>
<!-- nav toolbar -->
<svg style="left:374px;top:147px" width="14" height="15" viewBox="0 0 14 15"><defs><linearGradient id="gnv" x1="0" y1="0" x2="0" y2="1"><stop offset="0" stop-color="#fafafa"/><stop offset="1" stop-color="#bcbcbc"/></linearGradient></defs><path d="M0.6 7.4 L7.2 0.8 L7.2 4.4 L13.2 4.4 L13.2 10.4 L7.2 10.4 L7.2 14 Z" fill="url(#gnv)" stroke="#a0a0a0" stroke-width="0.9" stroke-linejoin="round"/></svg>
<svg style="left:398px;top:147px" width="14" height="15" viewBox="0 0 14 15"><path d="M13.4 7.4 L6.8 0.8 L6.8 4.4 L0.8 4.4 L0.8 10.4 L6.8 10.4 L6.8 14 Z" fill="url(#gnv)" stroke="#a4a4a4" stroke-width="0.9" stroke-linejoin="round"/></svg>
<svg style="left:419px;top:147px" width="16" height="15" viewBox="0 0 16 15"><path d="M0.6 7 L6.6 0.6 L12.6 7 L9.2 7 Q9 10.4 11.6 10.6 Q13.6 10.6 14.4 8.6 Q15.6 14.4 10.6 14.4 Q4.4 14.4 4.2 7 Z" fill="url(#ggr)" stroke="#3c8410" stroke-width="0.9" stroke-linejoin="round"/></svg>
<svg style="left:449px;top:145px" width="18" height="17" viewBox="0 0 18 17"><path d="M1 4.8 Q1 3.6 2.2 3.6 L6.4 3.6 L7.8 5.2 L14 5.2 L14 15.4 L1 15.4Z" fill="#f4c450" stroke="#b48428" stroke-width="0.9"/><path d="M1.6 8 L14.4 8 L14.4 15.4 L1.6 15.4Z" fill="url(#gfo)"/><path d="M1 15.6 L14.4 15.6" stroke="#a87820" stroke-width="0.9"/><path d="M13.00 -0.20 L14.18 2.98 L17.57 3.12 L14.90 5.22 L15.82 8.48 L13.00 6.60 L10.18 8.48 L11.10 5.22 L8.43 3.12 L11.82 2.98Z" fill="#e81c2c"/><path d="M15.82 0.72 L14.90 3.98 L17.57 6.08 L14.18 6.22 L13.00 9.40 L11.82 6.22 L8.43 6.08 L11.10 3.98 L10.18 0.72 L13.00 2.60Z" fill="#e81c2c"/><circle cx="13" cy="4.6" r="1.5" fill="#ffc0c0"/></svg>
<svg style="left:473px;top:145px" width="17" height="17" viewBox="0 0 17 17"><rect x="0.6" y="5.4" width="15.4" height="7.6" fill="#fff" stroke="#4458b4" stroke-width="1.1"/><rect x="2.6" y="7.2" width="1.2" height="4" fill="#202020"/><path d="M2.4 15.6 L4 11.4 L13.6 1.2 Q15.4 0.6 16 2.8 L6.4 13.4 Z" fill="#f4a820" stroke="#b06c14" stroke-width="0.8"/><path d="M2.4 15.6 L3.4 12.8 L5 14.4Z" fill="#403020"/><path d="M5 11.2 L13.8 2" stroke="#ffe08c" stroke-width="1"/></svg>
<svg style="left:497px;top:147px" width="15" height="14" viewBox="0 0 15 14"><path d="M1 3.4 L3.6 0.8 L7.4 4.4 L11.2 0.8 L13.8 3.4 L10.2 7 L13.8 10.6 L11.2 13.2 L7.4 9.6 L3.6 13.2 L1 10.6 L4.6 7Z" fill="#e4626e" stroke="#c8485a" stroke-width="0.9" stroke-linejoin="round"/><path d="M3.6 2.2 L7.4 5.8 L11.2 2.2" fill="none" stroke="#f8a0a8" stroke-width="1"/></svg>
<svg style="left:528px;top:146px" width="17" height="15" viewBox="0 0 17 15"><rect x="0.6" y="0.6" width="15.6" height="13.8" fill="#fff" stroke="#5c60b0" stroke-width="1.1"/><rect x="0.6" y="0.6" width="15.6" height="2.2" fill="#7478c4"/><g fill="#5c60b8"><rect x="3" y="4.6" width="2.4" height="2.2"/><rect x="7.2" y="4.6" width="2.4" height="2.2"/><rect x="11.4" y="4.6" width="2.4" height="2.2"/><rect x="3" y="8.2" width="2.4" height="2.2"/><rect x="7.2" y="8.2" width="2.4" height="2.2"/><rect x="11.4" y="8.2" width="2.4" height="2.2"/><rect x="3" y="11.4" width="2.4" height="1.6"/><rect x="7.2" y="11.4" width="2.4" height="1.6"/><rect x="11.4" y="11.4" width="2.4" height="1.6"/></g></svg>
<svg style="left:553.9000000000001px;top:151.2px" width="11.6" height="6.2" viewBox="0 0 11.6 6.2"><path d="M0 0 L11.6 0 L5.8 6.2Z" fill="#000"/></svg>
<svg style="left:574px;top:146px" width="17" height="16" viewBox="0 0 17 16"><path d="M5.4 0.6 L10.4 5.8 L7.6 5.8 L7.6 11 L3.2 11 L3.2 5.8 L0.4 5.8Z" fill="url(#ggr)" stroke="#2c7c10" stroke-width="0.9" stroke-linejoin="round"/><path d="M11 15.6 L16 10.4 L13.2 10.4 L13.2 5 L8.8 5 L8.8 10.4 L6 10.4Z" fill="url(#ggr)" stroke="#2c7c10" stroke-width="0.9" stroke-linejoin="round"/></svg>
<svg style="left:595.8000000000001px;top:151.2px" width="11.6" height="6.2" viewBox="0 0 11.6 6.2"><path d="M0 0 L11.6 0 L5.8 6.2Z" fill="#000"/></svg>
<svg style="left:617px;top:146px" width="16" height="16" viewBox="0 0 16 16"><defs><linearGradient id="gfu" x1="0" y1="0" x2="1" y2="0"><stop offset="0" stop-color="#f8b030"/><stop offset="0.45" stop-color="#ffe48c"/><stop offset="1" stop-color="#e8941c"/></linearGradient></defs><path d="M1 2.6 L14.8 2.6 L9.6 8.8 L9.6 14.6 Q7.9 15.8 6.2 14.6 L6.2 8.8Z" fill="url(#gfu)" stroke="#c8801c" stroke-width="0.9" stroke-linejoin="round"/><ellipse cx="7.9" cy="2.6" rx="6.9" ry="1.8" fill="#ffeaa4" stroke="#c8801c" stroke-width="0.9"/></svg>
<svg style="left:637.9000000000001px;top:151.2px" width="11.6" height="6.2" viewBox="0 0 11.6 6.2"><path d="M0 0 L11.6 0 L5.8 6.2Z" fill="#000"/></svg>
<svg style="left:659px;top:146px" width="16" height="16" viewBox="0 0 16 16"><path d="M1 7.4 Q2 1.6 8 1.8 Q10.4 2 11.8 3.4 L13.6 1.6 L14 7.4 L8.4 7 L10 5.2 Q8.8 4.2 7.6 4.2 Q4.6 4.4 3.8 7.4Z" fill="#98a4ec" stroke="#4450b0" stroke-width="0.8" stroke-linejoin="round"/><path d="M14.6 8.6 Q13.6 14.4 7.6 14.2 Q5.2 14 3.8 12.6 L2 14.4 L1.6 8.6 L7.2 9 L5.6 10.8 Q6.8 11.8 8 11.8 Q11 11.6 11.8 8.6Z" fill="#98a4ec" stroke="#4450b0" stroke-width="0.8" stroke-linejoin="round"/></svg>
<svg style="left:690px;top:145px" width="17" height="17" viewBox="0 0 17 17"><path d="M8.40 0.80 L10.46 6.17 L16.20 6.47 L11.73 10.08 L13.22 15.63 L8.40 12.50 L3.58 15.63 L5.07 10.08 L0.60 6.47 L6.34 6.17Z" fill="#ffd84c" stroke="#c08c28" stroke-width="0.9" stroke-linejoin="round"/><path d="M8.40 4.40 L9.58 7.38 L12.77 7.58 L10.30 9.62 L11.10 12.72 L8.40 11.00 L5.70 12.72 L6.50 9.62 L4.03 7.58 L7.22 7.38Z" fill="#ffeea0"/></svg>
<svg style="left:711.0px;top:151.2px" width="11.6" height="6.2" viewBox="0 0 11.6 6.2"><path d="M0 0 L11.6 0 L5.8 6.2Z" fill="#000"/></svg>
<div class="vsep" style="left:441px;top:145px;height:17px;background:#a0a0a0"></div>
<div class="vsep" style="left:518px;top:145px;height:17px;background:#a0a0a0"></div>
<div class="vsep" style="left:681px;top:145px;height:17px;background:#a0a0a0"></div>
<!-- address box -->
<div class="a" style="left:730px;top:136px;width:320px;height:33px;box-sizing:border-box;background:#fff;border:1px solid #7a7a7a;border-bottom-color:#b0b0b0"></div>
<span class="t" style="left:737.4px;top:141.5px;font-size:18px;letter-spacing:-0.096px;color:#161616;">C:\Users\Public\</span>
<!-- file panel -->
<div class="a" id="files" style="left:368px;top:170px;width:700px;height:640px;box-sizing:border-box;border:1px solid #a0a0a0;background:#fff">
  <div class="a" style="left:1px;top:1px;width:700px;height:640px;box-sizing:border-box;border:1px solid #696969;background:#fff"></div>
</div>
<div class="lb" style="left:379px;top:253.1px;height:24.7px;background:#0078d7"></div>
<div class="lb" style="left:379px;top:279.3px;height:15.6px"></div>
<div class="lb" style="left:379px;top:296.8px;height:17px"></div>
<svg style="left:383.7px;top:177.5px" width="98" height="76" viewBox="0 0 98 76"><use href="#bigfoldersel"/></svg>
<div class="lb" style="left:489px;top:253.1px;height:24.7px;background:#c0c0c0"></div>
<div class="lb" style="left:489px;top:279.3px;height:15.6px"></div>
<div class="lb" style="left:489px;top:296.8px;height:17px"></div>
<svg style="left:493.7px;top:177.5px" width="98" height="76" viewBox="0 0 98 76"><use href="#bigfolder"/></svg>
<div class="lb" style="left:599px;top:253.1px;height:24.7px;background:#c0c0c0"></div>
<div class="lb" style="left:599px;top:279.3px;height:15.6px"></div>
<div class="lb" style="left:599px;top:296.8px;height:17px"></div>
<svg style="left:603.7px;top:177.5px" width="98" height="76" viewBox="0 0 98 76"><use href="#bigfolder"/></svg>
<div class="lb" style="left:709px;top:253.1px;height:24.7px;background:#c0c0c0"></div>
<div class="lb" style="left:709px;top:279.3px;height:15.6px"></div>
<div class="lb" style="left:709px;top:296.8px;height:17px"></div>
<svg style="left:713.7px;top:177.5px" width="98" height="76" viewBox="0 0 98 76"><use href="#bigfolder"/></svg>
<div class="lb" style="left:819px;top:253.1px;height:24.7px;background:#c0c0c0"></div>
<div class="lb" style="left:819px;top:279.3px;height:15.6px"></div>
<div class="lb" style="left:819px;top:296.8px;height:17px"></div>
<svg style="left:823.7px;top:177.5px" width="98" height="76" viewBox="0 0 98 76"><use href="#bigfolder"/></svg>
<div class="lb" style="left:929px;top:253.1px;height:24.7px;background:#c0c0c0"></div>
<div class="lb" style="left:929px;top:279.3px;height:15.6px"></div>
<div class="lb" style="left:929px;top:296.8px;height:17px"></div>
<svg style="left:933.7px;top:177.5px" width="98" height="76" viewBox="0 0 98 76"><use href="#bigfolder"/></svg>
<span class="t" style="left:384.0px;top:254.8px;font-size:17.5px;letter-spacing:0.423px;color:#fff;">Documents</span><span class="t" style="left:495.4px;top:254.8px;font-size:17.5px;letter-spacing:0.478px;color:#161616;">Downloads</span><span class="t" style="left:627.2px;top:254.8px;font-size:17.5px;letter-spacing:0.349px;color:#161616;">Music</span><span class="t" style="left:729.0px;top:254.8px;font-size:17.5px;letter-spacing:-0.246px;color:#161616;">Pictures</span><span class="t" style="left:833.9px;top:254.8px;font-size:17.5px;letter-spacing:0.209px;color:#161616;">Roaming</span><span class="t" style="left:952.6px;top:254.8px;font-size:17.5px;letter-spacing:0.279px;color:#161616;">Videos</span>
</body>
</html>
